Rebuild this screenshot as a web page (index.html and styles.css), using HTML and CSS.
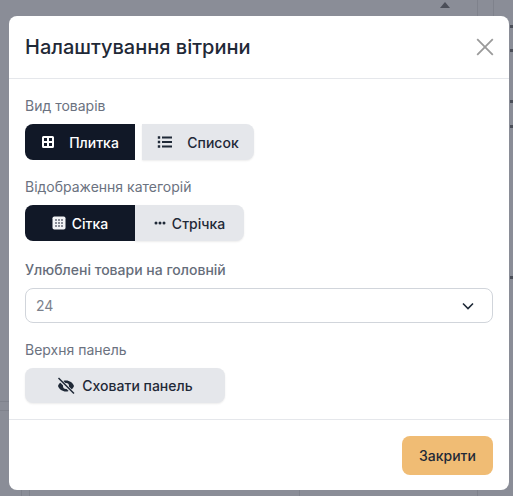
FILE: index.html
```html
<!DOCTYPE html>
<html lang="uk">
<head>
<meta charset="utf-8">
<title>Налаштування вітрини</title>
<link rel="stylesheet" href="styles.css">
</head>
<body>
<div class="backdrop">
  <svg class="bg-mark bg-arrow" width="10" height="6" viewBox="0 0 10 6"><path d="M5 0l5 6H0z" fill="#4b4e58"/></svg>
  <i class="bg-line v v1"></i>
  <i class="bg-line v v2"></i>
  <i class="bg-line v v3"></i>
  <i class="bg-line v v4"></i>
  <i class="bg-line v v5"></i>
  <i class="bg-line v v6"></i>
  <i class="bg-line h h1"></i>
  <i class="bg-line h h2"></i>
  <i class="bg-dot d1"></i>
  <i class="bg-dot d2"></i>
  <i class="bg-dot d3"></i>
  <i class="bg-dot d4"></i>
  <i class="bg-dot d5"></i>
  <section class="modal">
    <header class="modal-header">
      <h1 class="modal-title">Налаштування вітрини</h1>
      <button class="close" aria-label="Закрити">
        <svg width="18" height="18" viewBox="0 0 18 18"><path d="M1.200 1.200l15.600 15.600M16.800 1.200L1.200 16.800" fill="none" stroke="#9a9a9a" stroke-width="1.800"/></svg>
      </button>
    </header>
    <div class="modal-body">
      <div class="field">
        <div class="label">Вид товарів</div>
        <div class="row">
          <button class="btn dark wide round-l">
            <svg width="14" height="14" viewBox="0 0 14 14"><path fill-rule="evenodd" d="M2.500 1h9A1.500 1.500 0 0 1 13 2.500v9a1.500 1.500 0 0 1-1.500 1.500h-9A1.500 1.500 0 0 1 1 11.500v-9A1.500 1.500 0 0 1 2.500 1zM3 3v3h3V3zm5 0v3h3V3zM3 8v3h3V8zm5 0v3h3V8z" fill="#fff"/></svg>
            <span>Плитка</span>
          </button>
          <button class="btn light wide detached">
            <svg width="16" height="14" viewBox="0 0 16 14"><path d="M5 2.500h10M5 7h10M5 11.500h10" stroke="#1f2937" stroke-width="1.800" fill="none"/><path d="M.8 1.300h2.400v2.400H.8zM.8 5.800h2.400v2.400H.8zM.8 10.300h2.400v2.400H.8z" fill="#1f2937"/></svg>
            <span>Список</span>
          </button>
        </div>
      </div>
      <div class="field">
        <div class="label">Відображення категорій</div>
        <div class="row">
          <button class="btn dark narrow round-l w-110">
            <svg width="14" height="14" viewBox="0 0 14 14"><rect x=".5" y=".5" width="13" height="13" rx="1.800" fill="#f3f4f6"/><path d="M3 3h2v2H3zM6 3h2v2H6zM9 3h2v2H9zM3 6h2v2H3zM6 6h2v2H6zM9 6h2v2H9zM3 9h2v2H3zM6 9h2v2H6zM9 9h2v2H9z" fill="#8a8d97"/></svg>
            <span>Сітка</span>
          </button>
          <button class="btn light narrow round-r w-109">
            <svg width="12" height="4" viewBox="0 0 12 4"><circle cx="2" cy="2" r="1.500" fill="#1f2937"/><circle cx="6" cy="2" r="1.500" fill="#1f2937"/><circle cx="10" cy="2" r="1.500" fill="#1f2937"/></svg>
            <span>Стрічка</span>
          </button>
        </div>
      </div>
      <div class="field spaced">
        <div class="label strong">Улюблені товари на головній</div>
        <div class="select">
          <span>24</span>
          <svg width="12" height="8" viewBox="0 0 12 8"><path d="M1 1.500l5 5 5-5" fill="none" stroke="#1f2937" stroke-width="1.600"/></svg>
        </div>
      </div>
      <div class="field">
        <div class="label">Верхня панель</div>
        <button class="btn light panel-btn round-all">
          <svg width="18" height="18" viewBox="0 0 18 18"><path fill-rule="evenodd" d="M9 3.500c3.800 0 6.800 2.300 8 5.500-1.200 3.200-4.200 5.500-8 5.500S2.200 12.200 1 9c1.200-3.200 4.200-5.500 8-5.500zM9 6a3 3 0 1 0 0 6 3 3 0 0 0 0-6z" fill="#1f2937"/><path d="M1.500 1.500l15 15" stroke="#e5e7eb" stroke-width="3.200"/><path d="M1.500 1l15.500 15.500" stroke="#1f2937" stroke-width="1.500"/></svg>
          <span>Сховати панель</span>
        </button>
      </div>
    </div>
    <footer class="modal-footer">
      <button class="close-btn">Закрити</button>
    </footer>
  </section>
</div>
</body>
</html>
```
FILE: styles.css
```css
* { box-sizing: border-box; }
html, body { margin: 0; padding: 0; }
body { font-family: Inter, "Noto Sans", sans-serif; }
button { font-family: inherit; border: 0; cursor: pointer; }

.backdrop {
  position: relative;
  width: 513px;
  height: 496px;
  padding: 16px 4px 6px 9px;
  background: #8a8d97;
  overflow: hidden;
}
.bg-mark { position: absolute; }
.bg-arrow { top: 2px; left: 440px; }
.bg-line { position: absolute; background: #7f828c; }
.bg-line.v { width: 1px; }
.bg-line.h { height: 1px; left: 0; width: 9px; }
.v1 { left: 477px; top: 0; height: 16px; }
.v2 { left: 493px; top: 0; height: 16px; }
.v3 { left: 21px; top: 490px; height: 6px; }
.v4 { left: 29px; top: 490px; height: 6px; }
.v5 { left: 299px; top: 490px; height: 6px; }
.v6 { left: 477px; top: 490px; height: 6px; }
.h1 { top: 401px; }
.h2 { top: 410px; }
.bg-dot { position: absolute; left: 510px; width: 3px; height: 3px; background: #4b4e58; }
.d1 { top: 25px; }
.d2 { top: 49px; }
.d3 { top: 100px; }
.d4 { top: 125px; }
.d5 { top: 276px; }

.modal {
  display: flex;
  flex-direction: column;
  position: relative;
  width: 500px;
  height: 474px;
  background: #fff;
  border-radius: 8px;
}
.modal-header {
  display: flex;
  align-items: center;
  justify-content: space-between;
  height: 63px;
  padding: 0 15px 0 16px;
  border-bottom: 1px solid #e5e7eb;
}
.modal-title {
  margin: 0;
  font-size: 20px;
  font-weight: 500;
  line-height: 28px;
  color: #1f2937;
}
.close {
  display: flex;
  padding: 0;
  background: none;
}
.modal-body {
  flex: 1;
  display: flex;
  flex-direction: column;
  gap: 17px;
  padding: 17px 16px 0;
}
.field { display: flex; flex-direction: column; gap: 8px; }
.field.spaced { margin-top: 2px; }
.label {
  font-size: 14px;
  line-height: 20px;
  color: #6b7280;
}
.label.strong { color: #666d7a; font-weight: 500; }
.row { display: flex; }
.btn {
  display: flex;
  align-items: center;
  justify-content: center;
  height: 36px;
  font-size: 14px;
  font-weight: 500;
}
.dark { background: #111827; color: #fff; }
.light {
  background: #e5e7eb;
  color: #1f2937;
  box-shadow: 0 1px 2px rgba(0, 0, 0, 0.08);
}
.wide { gap: 14px; width: 110px; }
.detached { width: 112px; margin-left: 7px; border-radius: 0 8px 8px 0; }
.narrow { gap: 6px; }
.w-110 { width: 110px; }
.w-109 { width: 109px; }
.round-l { border-radius: 8px 0 0 8px; }
.round-r { border-radius: 0 8px 8px 0; }
.round-all { border-radius: 8px; }
.panel-btn { width: 200px; height: 35px; gap: 7px; }

.select {
  display: flex;
  align-items: center;
  justify-content: space-between;
  height: 35px;
  padding: 0 18px 0 10px;
  border: 1px solid #d1d5db;
  border-radius: 8px;
  font-size: 14px;
  color: #7b818c;
}

.modal-footer {
  display: flex;
  justify-content: flex-end;
  align-items: flex-start;
  height: 71px;
  padding: 16px 16px 0;
  border-top: 1px solid #e5e7eb;
}
.close-btn {
  width: 91px;
  height: 39px;
  border-radius: 8px;
  background: #f0bc74;
  font-size: 14px;
  font-weight: 500;
  color: #1f2937;
}
```
